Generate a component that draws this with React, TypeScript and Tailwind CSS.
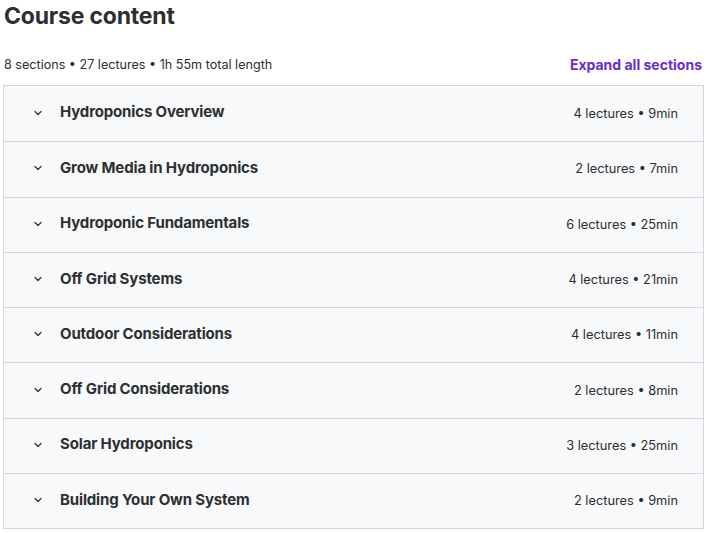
import type { FC } from 'react'

// ── Data ────────────────────────────────────────────────────────

const sections = [
  { title: 'Hydroponics Overview', meta: '4 lectures • 9min' },
  { title: 'Grow Media in Hydroponics', meta: '2 lectures • 7min' },
  { title: 'Hydroponic Fundamentals', meta: '6 lectures • 25min' },
  { title: 'Off Grid Systems', meta: '4 lectures • 21min' },
  { title: 'Outdoor Considerations', meta: '4 lectures • 11min' },
  { title: 'Off Grid Considerations', meta: '2 lectures • 8min' },
  { title: 'Solar Hydroponics', meta: '3 lectures • 25min' },
  { title: 'Building Your Own System', meta: '2 lectures • 9min' },
]

// ── Chevron ─────────────────────────────────────────────────────

const Chevron: FC = () => (
  <svg width="12" height="12" viewBox="0 0 12 12" fill="none" className="text-[#2d2f31] mb-[2px]">
    <path d="M3 4.5L6 7.5L9 4.5" stroke="currentColor" strokeWidth="1.2" strokeLinecap="round" strokeLinejoin="round" />
  </svg>
)

// ── App ─────────────────────────────────────────────────────────

const App: FC = () => {
  return (
    <div className="w-[707px] h-[533px] bg-white text-[#2d2f31] overflow-hidden" style={{ fontFamily: 'Inter, "Noto Sans", sans-serif' }}>
      <div className="pl-[4px] pr-[5px]">
        <h2 className="text-[23px] font-bold leading-[32px] tracking-[-0.2px]">Course content</h2>

        <div className="flex items-end justify-between mt-[23px] mb-[10px]">
          <span className="text-[12.6px] leading-[20px] text-[#2d2f31]">
            8 sections • 27 lectures • 1h 55m total length
          </span>
          <button className="text-[14px] leading-[20px] font-bold text-[#6a2bd0]">Expand all sections</button>
        </div>
      </div>

      <div className="ml-[3px] w-[701px] border border-[#d1d7dc]">
        {sections.map((s, i) => (
          <div
            key={s.title}
            className={`flex items-center h-[55.3px] bg-[#f7f9fa] pl-[28px] pr-[25px] ${i > 0 ? 'border-t border-[#d1d7dc]' : ''}`}
          >
            <Chevron />
            <span className="ml-[16px] mb-[3px] text-[15px] font-bold leading-[20px] tracking-[-0.15px]">{s.title}</span>
            <span className="ml-auto text-[12.8px] leading-[20px] text-[#2d2f31]">{s.meta}</span>
          </div>
        ))}
      </div>
    </div>
  )
}

export default App
